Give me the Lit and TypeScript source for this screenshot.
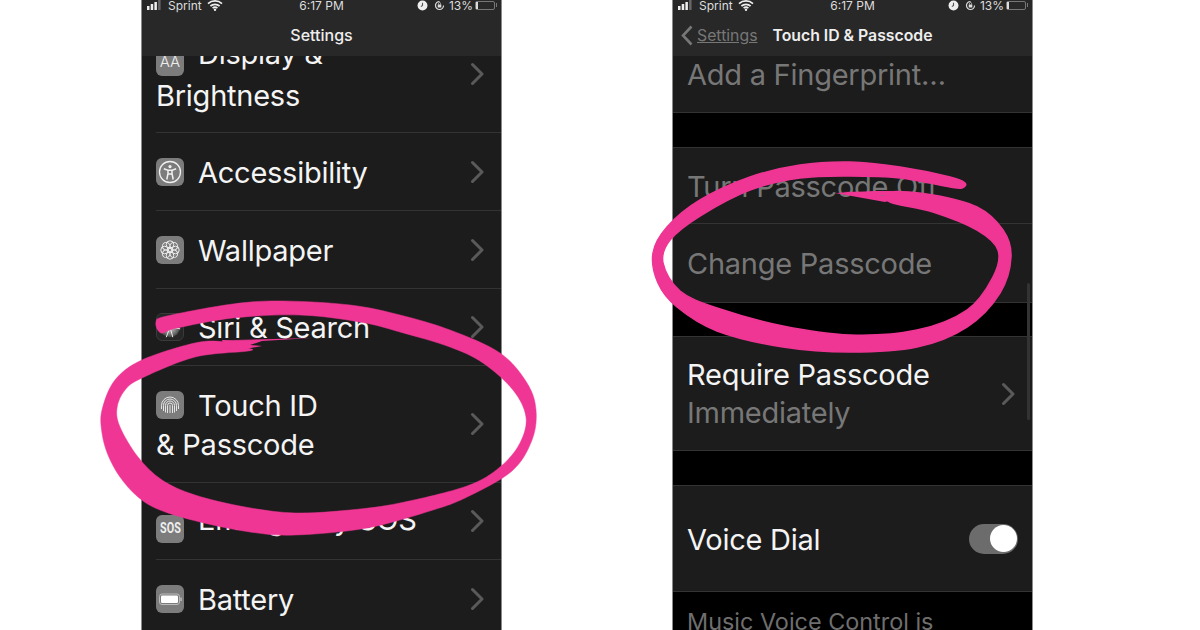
import { LitElement, html, css, svg } from "lit";
import { customElement } from "lit/decorators.js";

type P = [number, number];
const smooth = (pts: P[]) => {
  const n = pts.length;
  let d = `M${pts[0][0]} ${pts[0][1]}`;
  for (let i = 0; i < n; i++) {
    const p0 = pts[(i - 1 + n) % n], p1 = pts[i], p2 = pts[(i + 1) % n], p3 = pts[(i + 2) % n];
    const c1 = [p1[0] + (p2[0] - p0[0]) / 6, p1[1] + (p2[1] - p0[1]) / 6];
    const c2 = [p2[0] - (p3[0] - p1[0]) / 6, p2[1] - (p3[1] - p1[1]) / 6];
    d += `C${c1[0].toFixed(1)} ${c1[1].toFixed(1)} ${c2[0].toFixed(1)} ${c2[1].toFixed(1)} ${p2[0]} ${p2[1]}`;
  }
  return d + "Z";
};

const leftRing: P[] = [[156,322],[167,316],[233,304],[283,301],[350,305],[400,315],[450,330],[500,353],[527,383],[536,410],[532,440],[512,471],[467,497],[433,510],[367,528],[295,535],[250,532],[200,522],[160,510],[138,497],[120,477],[108,455],[102,433],[102,410],[115,380],[142,360],[195,343],[225,342],[248,348],[248,351],[195,357],[142,378],[125,390],[117,408],[120,427],[138,457],[162,480],[195,495],[245,507],[295,513],[350,510],[400,503],[467,486],[500,467],[520,443],[526,417],[513,390],[483,363],[450,347],[400,332],[360,322],[300,315],[233,318],[177,328],[161,333]];
const rightRing: P[] = [[965,183],[950,177],[900,167],[850,162],[800,165],[750,177],[700,200],[667,227],[653,253],[658,283],[677,307],[717,331],[783,347],[850,352],[917,347],[967,327],[1000,293],[1011,257],[1003,230],[977,207],[933,195],[890,192],[890,202],[933,212],[977,230],[998,250],[993,277],[967,310],[917,330],[850,335],[783,326],[717,308],[680,291],[663,263],[670,240],[700,216],[750,190],[800,178],[850,176],[900,178],[950,187],[962,188]];

const chevron = html`<svg class="chev" viewBox="0 0 14 24"><path d="M2.500 2.500l9.500 9.500L2.500 21.500" fill="none" stroke="#5a5a5a" stroke-width="3" stroke-linecap="round" stroke-linejoin="round"/></svg>`;

const status = html`<div class="status">
  <div class="st-left">
    <svg class="sig" viewBox="0 0 15 10"><rect x="0" y="6" width="2.500" height="4" fill="#eee"/><rect x="3.700" y="4" width="2.500" height="6" fill="#eee"/><rect x="7.400" y="2" width="2.500" height="8" fill="#eee"/><rect x="11.100" y="0" width="2.500" height="10" fill="#666"/></svg>
    <span>Sprint</span>
    <svg class="wifi" viewBox="0 0 16 11"><path d="M1 3.600C5 0 11 0 15 3.600M3.400 6C6 3.700 10 3.700 12.600 6M5.600 8.200C7 7 9 7 10.400 8.200" fill="none" stroke="#eee" stroke-width="1.700"/><circle cx="8" cy="9.700" r="1.200" fill="#eee"/></svg>
  </div>
  <span class="time">6:17 PM</span>
  <div class="st-right">
    <svg class="alarm" viewBox="0 0 10 10"><circle cx="5" cy="5" r="4.500" fill="#eee"/><path d="M5 2.500V5L3.500 6" stroke="#555" fill="none"/></svg>
    <svg class="lock" viewBox="0 0 11 11"><path d="M9.500 5.500A4 4 0 1 1 5.500 1.500" fill="none" stroke="#ddd" stroke-width="1.200"/><rect x="3.700" y="4.500" width="3.600" height="3" fill="#ddd"/><path d="M4.500 4.500V3.500a1 1 0 0 1 2 0v1" fill="none" stroke="#ddd" stroke-width=".7"/></svg>
    <span>13%</span>
    <span class="batt"><i></i></span><span class="nub"></span>
  </div>
</div>`;

const tile = (inner: unknown, extra = "") => html`<span class="tile ${extra}">${inner}</span>`;

const icons = {
  aa: tile(html`<span class="aa">AA</span>`),
  access: tile(html`<svg viewBox="0 0 28 28"><circle cx="14" cy="14" r="10.500" fill="none" stroke="#f0f0f0" stroke-width="1.300"/><circle cx="14" cy="8.600" r="1.600" fill="#f0f0f0"/><path d="M7.800 10.800L12 12.200V15.500L10.800 21.500M20.200 10.800L16 12.200V15.500L17.200 21.500M12 12.200H16M12 16H16" fill="none" stroke="#f0f0f0" stroke-width="1.500"/></svg>`),
  wall: tile(html`<svg viewBox="0 0 28 28" fill="none" stroke="#eee" stroke-width="1">${[0,45,90,135,180,225,270,315].map(a => svg`<circle cx="14" cy="8.600" r="3.800" transform="rotate(${a} 14 14)"/>`)}<circle cx="14" cy="14" r="3"/></svg>`),
  siri: tile(html`<svg viewBox="0 0 28 28"><defs><radialGradient id="s"><stop offset="0" stop-color="#ddd"/><stop offset=".7" stop-color="#777"/><stop offset="1" stop-color="#444"/></radialGradient></defs><circle cx="14" cy="14" r="11" fill="url(#s)"/><path d="M14 14L24 7M14 14L17 25M14 14L5 20M14 14L8 4M14 14L25 16M14 14L10 25" stroke="#f4f4f4" stroke-width="1"/></svg>`, "dark"),
  touch: tile(html`<svg viewBox="0 0 28 28" fill="none" stroke="#f0f0f0" stroke-width=".9"><path d="M5.500 18V14.500a8.500 8.500 0 0 1 17 0V18"/><path d="M7.500 20V14.500a6.500 6.500 0 0 1 13 0V20"/><path d="M9.500 21.500V14.500a4.500 4.500 0 0 1 9 0V21.500"/><path d="M11.500 22V14.500a2.500 2.500 0 0 1 5 0V22"/><path d="M14 14v8"/></svg>`),
  sos: tile(html`<span class="sos">SOS</span>`),
  battery: tile(html`<svg viewBox="0 0 28 28"><rect x="3.500" y="9" width="20" height="10.500" rx="2.500" fill="none" stroke="#bbb" stroke-width="1"/><rect x="5" y="10.500" width="17" height="7.500" rx="1.300" fill="#fff"/><rect x="24.300" y="12.500" width="1.500" height="3.500" fill="#bbb"/></svg>`),
};

const leftRows = [
  { h: 117, icon: icons.aa, first: "Display &", second: "Brightness" },
  { h: 78, icon: icons.access, first: "Accessibility" },
  { h: 78, icon: icons.wall, first: "Wallpaper" },
  { h: 77, icon: icons.siri, first: "Siri & Search" },
  { h: 117, icon: icons.touch, first: "Touch ID", second: "& Passcode" },
  { h: 77, icon: icons.sos, first: "Emergency SOS" },
  { h: 78, icon: icons.battery, first: "Battery" },
];

@customElement("app-root")
export class AppRoot extends LitElement {
  static styles = css`
    :host { display: block; width: 1200px; height: 630px; background: #fff; position: relative; overflow: hidden; font-family: Inter, "Liberation Sans", sans-serif; }
    .page { display: flex; gap: 170px; padding-left: 141px; height: 630px; }
    .phone { width: 361px; height: 630px; box-sizing: border-box; border-left: 1px solid #8a8a8a; border-right: 1px solid #8a8a8a; background: #000; display: flex; flex-direction: column; overflow: hidden; position: relative; }
    .head { height: 56px; flex: none; background: #282828; position: relative; z-index: 2; display: flex; flex-direction: column; }
    .status { height: 10px; display: flex; align-items: center; justify-content: space-between; padding: 0 4px 0 5px; color: #ddd; font-size: 12px; position: relative; }
    .st-left, .st-right { display: flex; align-items: center; }
    .st-left span { margin: 0 5px 0 6px; }
    .sig { width: 15px; height: 10px; }
    .wifi { width: 16px; height: 11px; }
    .time { position: absolute; left: 0; right: 0; text-align: center; font-size: 12px; }
    .alarm { width: 11px; height: 11px; margin-right: 6px; }
    .lock { width: 11px; height: 11px; margin-right: 4px; }
    .batt { width: 20px; height: 9px; box-sizing: border-box; border: 1px solid #777; border-radius: 2px; margin-left: 2px; display: flex; }
    .batt i { width: 2px; background: #ddd; }
    .nub { width: 1px; height: 4px; background: #777; margin-left: 1px; }
    .nav { flex: 1; display: flex; align-items: center; justify-content: center; color: #eee; font-size: 16px; font-weight: 500; padding-top: 4px; position: relative; }
    .nav.detail { justify-content: flex-start; padding-left: 8px; font-size: 15.800px; }
    .back { width: 12px; height: 21px; margin-right: 4px; }
    .back-label { color: #777; font-weight: 400; text-decoration: underline; margin-right: 15px; }
    .detail-title { font-weight: 600; color: #eee; }
    .list { flex: 1; min-height: 0; overflow: hidden; background: #1c1c1c; }
    .list.back-black { background: #000; }
    .scroll { display: flex; flex-direction: column; }
    .scroll.s1 { margin-top: -40px; }
    .scroll.s2 { margin-top: -21px; }
    .row { flex: none; box-sizing: border-box; padding-left: 14px; background: #1c1c1c; display: flex; }
    .inner { flex: 1; display: flex; align-items: center; justify-content: space-between; border-bottom: 1px solid #333; padding-right: 17px; }
    .txt { font-size: 29px; line-height: 39px; color: #f4f4f4; letter-spacing: -0.25px; margin-top: 1px; }
    .tile { display: inline-flex; align-items: center; justify-content: center; width: 28px; height: 28px; border-radius: 6px; background: #7c7c7c; margin-right: 14px; vertical-align: -3px; overflow: hidden; }
    .tile.dark { background: #262626; border: 1px solid #3a3a3a; box-sizing: border-box; }
    .tile svg { width: 28px; height: 28px; display: block; }
    .aa { font-size: 15px; line-height: 15px; font-weight: 300; color: #eee; letter-spacing: 0; }
    .sos { font-size: 15px; line-height: 15px; font-weight: 700; color: #eee; letter-spacing: 0; font-family: "Roboto", sans-serif; transform: scaleX(.72); }
    .chev { width: 14px; height: 24px; flex: none; }
    .cell { flex: none; box-sizing: border-box; background: #1c1c1c; border-bottom: 1px solid #333; padding: 0 14px 0 14px; display: flex; align-items: center; justify-content: space-between; }
    .cell.top { border-top: 1px solid #333; }
    .cell .chev { margin-right: 3px; }
    .gap { flex: none; background: #000; }
    .dim { color: #777; }
    .two { line-height: 38px; }
    .toggle { width: 49px; height: 30px; border-radius: 15px; background: #6c6c6c; display: flex; justify-content: flex-end; align-items: center; padding-right: 1px; box-sizing: border-box; }
    .toggle i { width: 27px; height: 27px; border-radius: 50%; background: #fff; }
    .foot { background: #000; color: #6e6e6e; padding: 14px 14px 0; font-size: 23.400px; line-height: 32px; white-space: nowrap; }
    .bar { position: absolute; right: 2px; top: 283px; width: 3px; height: 137px; background: #333; border-radius: 2px; z-index: 1; }
    .ink { position: absolute; inset: 0; width: 1200px; height: 630px; pointer-events: none; fill: #ef3694; stroke: #ef3694; stroke-linejoin: round; }
    .ring-a { stroke-width: 0.5px; }
    .ring-b { stroke-width: 1.5px; }
    .fray { stroke: none; }
  `;

  render() {
    return html`<div class="page">
      <section class="phone">
        <div class="head">${status}<div class="nav">Settings</div></div>
        <div class="list"><div class="scroll s1">
          ${leftRows.map(r => html`<div class="row" style="height:${r.h}px"><div class="inner">
            <div class="txt">${r.icon}${r.first}${r.second ? html`<br />${r.second}` : ""}</div>${chevron}
          </div></div>`)}
        </div></div>
      </section>
      <section class="phone">
        <div class="head">${status}<div class="nav detail">
          <svg class="back" viewBox="0 0 12 21"><path d="M10.500 1.500L2 10.500l8.500 9" fill="none" stroke="#777" stroke-width="2.600"/></svg>
          <span class="back-label">Settings</span><span class="detail-title">Touch ID &amp; Passcode</span>
        </div></div>
        <div class="list back-black"><div class="scroll s2">
          <div class="cell" style="height:78px"><div class="txt dim">Add a Fingerprint…</div></div>
          <div class="gap" style="height:34px"></div>
          <div class="cell top" style="height:77px"><div class="txt dim">Turn Passcode Off</div></div>
          <div class="cell" style="height:79px"><div class="txt dim">Change Passcode</div></div>
          <div class="gap" style="height:33px"></div>
          <div class="cell top" style="height:115px"><div class="txt two">Require Passcode<br /><span class="dim">Immediately</span></div>${chevron}</div>
          <div class="gap" style="height:34px"></div>
          <div class="cell top" style="height:107px"><div class="txt">Voice Dial</div><div class="toggle"><i></i></div></div>
          <div class="foot">Music Voice Control is</div>
        </div></div>
        <div class="bar"></div>
      </section>
    </div>
    <svg class="ink" viewBox="0 0 1200 630">
      <path class="ring-a" d=${smooth(leftRing)} />
      <path class="fray" d="M222 340L262 341L250 345L262 346L240 350L225 348ZM232 340L312 338L262 341Z" />
      <path class="ring-b" d=${smooth(rightRing)} />
      <path class="fray" d="M835 193L890 191L905 197L880 195L895 199L885 202ZM840 192L895 191L860 194Z" />
    </svg>`;
  }
}
